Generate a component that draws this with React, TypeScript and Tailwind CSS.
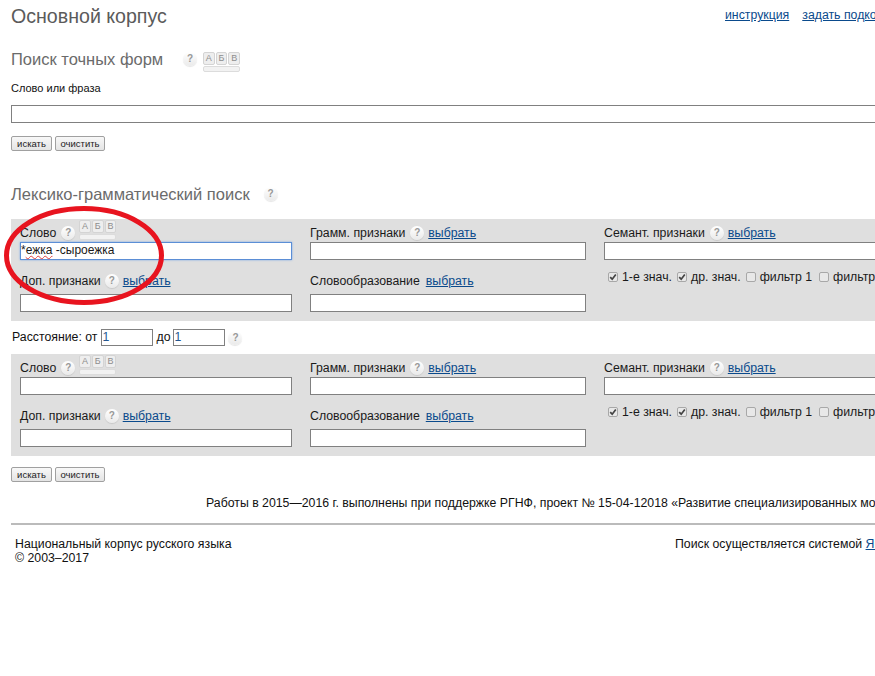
import React from "react";

const Help = ({ className = "" }: { className?: string }) => (
  <span className={`inline-flex items-center justify-center w-[14px] h-[14px] rounded-full bg-gradient-to-b from-[#ffffff] to-[#eaeaea] shadow-[0_1px_1px_rgba(0,0,0,0.1)] text-[10px] font-bold leading-none text-[#989898] ${className}`}>?</span>
);

const Keys = ({ className = "" }: { className?: string }) => (
  <span className={`inline-flex flex-col w-[37px] h-[20px] ${className}`}>
    <span className="flex h-[13px] gap-px">
      {["А", "Б", "В"].map((k) => (
        <span key={k} className="flex-1 flex items-center justify-center border border-[#d4d4d4] rounded-[2px] bg-[#eeeeee] text-[9px] leading-none text-[#8d8d8d]">{k}</span>
      ))}
    </span>
    <span className="mt-px h-[6px] border border-[#dcdcdc] rounded-[2px] bg-[#f2f2f2]"></span>
  </span>
);

const Link = ({ children, className = "" }: { children: React.ReactNode; className?: string }) => (
  <a href="#" className={`text-[#0a4a8c] underline ${className}`}>{children}</a>
);

const Field = ({ className = "" }: { className?: string }) => (
  <input type="text" className={`block h-[18px] border border-[#808080] bg-white outline-none ${className}`} />
);

const Check = ({ checked, label, className = "" }: { checked?: boolean; label: string; className?: string }) => (
  <span className={`flex items-center ${className}`}>
    <span className="w-[10px] h-[10px] mr-[4px] rounded-[2px] border border-[#a8a8a8] bg-[#e8e8e8] flex items-center justify-center">
      {checked && (
        <svg width="8" height="8" viewBox="0 0 8 8"><path d="M1.2 4.2 L3.2 6.2 L6.8 1.6" fill="none" stroke="#444" strokeWidth="1.7" /></svg>
      )}
    </span>
    {label}
  </span>
);

const Panel = ({ first }: { first?: boolean }) => (
  <div className="bg-[#dfdfdf] h-[102px] w-[1100px] pl-[9px] flex text-[12.3px] leading-[14px] text-[#1a1a1a]">
    <div className="w-[272px]">
      <div className="h-[23px] flex items-end pb-[2px] relative">
        <span>Слово</span>
        <Help className="ml-[5px]" />
        <Keys className="ml-[4px]" />
      </div>
      {first ? (
        <div className="h-[18px] border border-[#5b8ed6] bg-white shadow-[0_0_2px_#7aa7e6] text-[12px] leading-[15px] whitespace-pre">
          *<span className="underline decoration-wavy decoration-[#e04040] decoration-1">ежка</span> -сыроежка
        </div>
      ) : (
        <Field className="w-full" />
      )}
      <div className="h-[16px] mt-[13px] flex items-center">
        <span>Доп. признаки</span>
        <Help className="ml-[4px]" />
        <Link className="ml-[4px]">выбрать</Link>
      </div>
      <Field className="w-full mt-[5px]" />
    </div>
    <div className="w-[276px] ml-[18px]">
      <div className="h-[23px] flex items-end pb-[2px]">
        <span>Грамм. признаки</span>
        <Help className="ml-[5px]" />
        <Link className="ml-[4px]">выбрать</Link>
      </div>
      <Field className="w-full" />
      <div className="h-[16px] mt-[13px] flex items-center">
        <span>Словообразование</span>
        <Link className="ml-[6px]">выбрать</Link>
      </div>
      <Field className="w-full mt-[5px]" />
    </div>
    <div className="w-[300px] ml-[18px]">
      <div className="h-[23px] flex items-end pb-[2px]">
        <span>Семант. признаки</span>
        <Help className="ml-[5px]" />
        <Link className="ml-[4px]">выбрать</Link>
      </div>
      <Field className="w-full" />
      <div className="flex mt-[10px] ml-[4px] whitespace-nowrap">
        <Check checked label="1-е знач." />
        <Check checked label="др. знач." className="ml-[5px]" />
        <Check label="фильтр 1" className="ml-[5px]" />
        <Check label="фильтр 2" className="ml-[7px]" />
      </div>
    </div>
  </div>
);

const Buttons = ({ className = "" }: { className?: string }) => (
  <div className={`flex gap-[3px] ${className}`}>
    {[["искать", "w-[41px]"], ["очистить", "w-[50px]"]].map(([t, w]) => (
      <button key={t} className={`${w} h-[15px] border border-[#a0a0a0] rounded-[2px] bg-gradient-to-b from-[#f8f8f8] to-[#e4e4e4] text-[9.5px] leading-[12px] text-[#222]`}>{t}</button>
    ))}
  </div>
);

export default function App() {
  return (
    <div className="w-[875px] h-[676px] overflow-hidden relative bg-white font-['Liberation_Sans',Arial,sans-serif] text-[#1a1a1a]">
      <div className="w-[1200px] pl-[11px]">
        <div className="flex items-start h-[47px]">
          <h1 className="text-[19.6px] leading-[24px] mt-[4px] font-normal text-[#5b5b5b] whitespace-nowrap">Основной корпус</h1>
          <div className="absolute left-[725px] top-[8px] text-[12.3px] leading-[14px] whitespace-nowrap flex gap-[13px]">
            <Link>инструкция</Link>
            <Link>задать подкорпус</Link>
          </div>
        </div>

        <div className="flex items-center h-[24px]">
          <h2 className="text-[16.5px] leading-[20px] font-normal text-[#6b6b6b] w-[172px] whitespace-nowrap">Поиск точных форм</h2>
          <Help className="mb-[1px]" />
          <Keys className="ml-[6px] mt-[5px]" />
        </div>
        <div className="text-[11px] leading-[13px] text-[#111] mt-[11px]">Слово или фраза</div>
        <Field className="w-[1100px] h-[16px] mt-[10px]" />
        <Buttons className="mt-[13px]" />

        <div className="flex items-center h-[20px] mt-[33px]">
          <h2 className="text-[16.5px] leading-[20px] font-normal text-[#6b6b6b] whitespace-nowrap">Лексико-грамматический поиск</h2>
          <Help className="ml-[14px]" />
        </div>

        <div className="mt-[15px]"><Panel first /></div>

        <div className="flex items-center h-[17px] mt-[8px] ml-px text-[12.3px] text-[#111]">
          <span>Расстояние: от</span>
          <input defaultValue="1" className="ml-[4px] w-[52px] h-[17px] border border-[#808080] bg-white text-[12.3px] text-[#23558f] outline-none" />
          <span className="ml-[3px]">до</span>
          <input defaultValue="1" className="ml-[3px] w-[52px] h-[17px] border border-[#808080] bg-white text-[12.3px] text-[#23558f] outline-none" />
          <Help className="ml-[3px]" />
        </div>

        <div className="mt-[8px]"><Panel /></div>

        <Buttons className="mt-[11px]" />

        <div className="mt-[14px] ml-[195px] text-[12.3px] leading-[14px] text-[#111] whitespace-nowrap">
          Работы в 2015—2016 г. выполнены при поддержке РГНФ, проект № 15-04-12018 «Развитие специализированных модулей»
        </div>

        <div className="mt-[13px] h-[2px] w-[1100px] bg-[#bbbbbb]"></div>

        <div className="flex mt-[12px] text-[12.3px] leading-[14px] text-[#111]">
          <div className="ml-[4px] w-[660px]">
            <div>Национальный корпус русского языка</div>
            <div>© 2003–2017</div>
          </div>
          <div className="whitespace-nowrap">Поиск осуществляется системой <Link>Яндекс</Link></div>
        </div>
      </div>

      <svg className="absolute left-0 top-[200px] pointer-events-none" width="175" height="112" viewBox="0 0 175 112">
        <ellipse cx="84" cy="55.5" rx="77.5" ry="47" fill="none" stroke="#e8141f" strokeWidth="5" />
      </svg>
    </div>
  );
}
